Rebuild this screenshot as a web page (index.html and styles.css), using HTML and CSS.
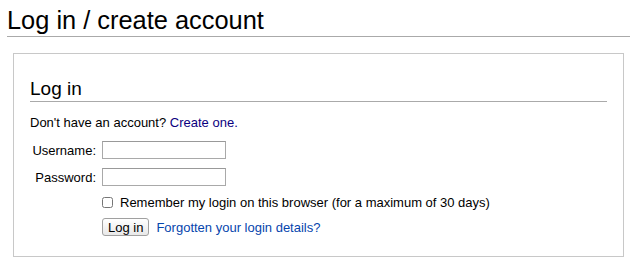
FILE: index.html
```html
<!DOCTYPE html>
<html lang="en">
<head>
  <meta charset="UTF-8" />
  <title>Log in / create account</title>
  <link rel="stylesheet" href="styles.css">
</head>
<body>
  <h1 class="first-heading">Log in / create account</h1>

  <div class="userlogin">
    <h2>Log in</h2>
    <p class="signup">Don't have an account? <a href="#" class="visited">Create one.</a></p>

    <form class="login-form" onsubmit="return false">
      <div class="row">
        <label class="label" for="name">Username:</label>
        <input class="field" type="text" id="name">
      </div>
      <div class="row">
        <label class="label" for="pass">Password:</label>
        <input class="field" type="password" id="pass">
      </div>
      <div class="row">
        <span class="label"></span>
        <label class="remember"><input type="checkbox" class="check"> Remember my login on this browser (for a maximum of 30 days)</label>
      </div>
      <div class="row">
        <span class="label"></span>
        <button class="login-button">Log in</button>
        <a href="#" class="forgot">Forgotten your login details?</a>
      </div>
    </form>
  </div>
</body>
</html>
```

FILE: styles.css
```css
body {
  margin: 0;
  padding: 0 7px;
  background: #fff;
  color: #000;
  font-family: "Liberation Sans", Arial, sans-serif;
  font-size: 13px;
}
a {
  color: #0645ad;
  text-decoration: none;
}
a.visited {
  color: #0b0080;
}
.first-heading {
  margin: 0;
  padding-top: 5px;
  font-size: 25.4px;
  font-weight: normal;
  line-height: 30px;
  border-bottom: 1px solid #aaa;
  padding-bottom: 1px;
}
.userlogin {
  margin: 16px 6px 0;
  border: 1px solid #c8c8c8;
  padding: 20px 16px 20px;
}
.userlogin h2 {
  margin: 0;
  font-size: 19px;
  font-weight: normal;
  line-height: 24px;
  padding-top: 3px;
  border-bottom: 1px solid #aaa;
}
.signup {
  margin: 13px 0 10px;
  line-height: 16px;
}
.row {
  display: flex;
  align-items: center;
  margin-bottom: 9px;
}
.row:last-child {
  margin-bottom: 0;
}
.label {
  width: 66px;
  margin-right: 6px;
  text-align: right;
  flex-shrink: 0;
}
.field {
  width: 124px;
  height: 18px;
  box-sizing: border-box;
  margin: 0;
  border: 1px solid #a9a9a9;
  border-top-color: #999;
  padding: 1px 3px;
  font-size: 12px;
}
.remember {
  display: flex;
  align-items: center;
  height: 14px;
}
.check {
  width: 11px;
  height: 11px;
  margin: 0 7px 0 0;
}
.login-button {
  height: 18px;
  margin: 0 7px 0 0;
  padding: 0 5px;
  font-family: inherit;
  font-size: 13px;
  background: linear-gradient(#fff, #e8e8e8);
  border: 1px solid #a0a0a0;
  border-radius: 3px;
}
```
